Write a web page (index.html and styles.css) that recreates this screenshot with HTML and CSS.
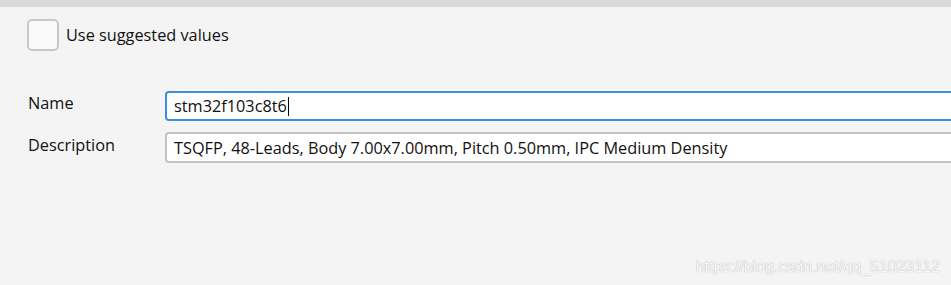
FILE: index.html
```html
<!DOCTYPE html>
<html>
<head>
<meta charset="utf-8">
<link rel="stylesheet" href="styles.css">
</head>
<body>
<div class="topbar"></div>
<div class="check-row">
  <span class="checkbox"></span>
  <span class="check-label">Use suggested values</span>
</div>
<div class="form">
  <div class="label">Name</div>
  <div class="field focused"><span class="value">stm32f103c8t6</span><span class="caret"></span></div>
  <div class="label">Description</div>
  <div class="field"><span class="value">TSQFP, 48-Leads, Body 7.00x7.00mm, Pitch 0.50mm, IPC Medium Density</span></div>
</div>
<div class="watermark">https://blog.csdn.net/qq_51023112</div>
</body>
</html>
```
FILE: styles.css
```css
html, body {
  margin: 0;
  padding: 0;
  height: 100%;
  overflow: hidden;
}
body {
  background: #f4f4f4;
  font-family: "Open Sans", "Noto Sans", sans-serif;
  font-size: 16.3px;
  color: #111;
  position: relative;
}
.topbar {
  height: 7px;
  background: #dadada;
}
.check-row {
  display: flex;
  align-items: center;
  gap: 7px;
  padding-left: 27px;
  margin-top: 12px;
}
.checkbox {
  box-sizing: border-box;
  width: 32px;
  height: 32px;
  border: 2px solid #c8c8c8;
  border-radius: 5px;
  background: #f9f9f9;
}
.check-label {
  line-height: 20px;
}
.form {
  display: grid;
  grid-template-columns: 137px 1fr;
  row-gap: 11px;
  margin-top: 40px;
  padding-left: 28px;
  margin-right: -20px;
  align-items: center;
}
.label {
  line-height: 20px;
  margin-top: -6px;
}
.field {
  box-sizing: border-box;
  height: 31px;
  border: 2px solid #c3c3c3;
  border-radius: 4px;
  background: #fff;
  display: flex;
  align-items: center;
  padding-left: 7px;
}
.field.focused {
  border-color: #3f8ddf;
  height: 30px;
}
.value {
  white-space: nowrap;
}
.caret {
  width: 1px;
  height: 19px;
  background: #000;
  margin-left: 1px;
}
.watermark {
  position: absolute;
  right: 11px;
  bottom: 9px;
  font-family: "Liberation Sans", sans-serif;
  font-size: 16px;
  color: #f9f9f9;
  text-shadow: 0 0 1px #9a9a9a;
}
```
